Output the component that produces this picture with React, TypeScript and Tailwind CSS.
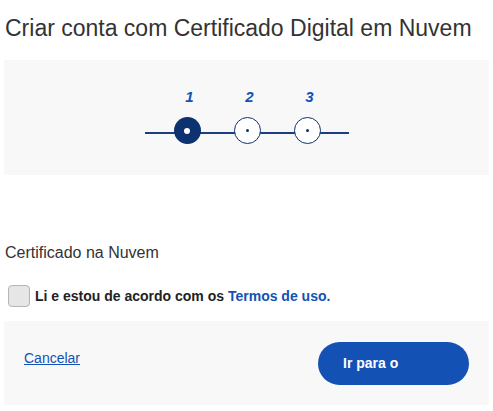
import React from "react";

function StepCircle({ active }: { active?: boolean }) {
  return active ? (
    <div className="w-[27px] h-[27px] rounded-full bg-[#0c326f] flex items-center justify-center relative z-10">
      <div className="w-[6px] h-[6px] rounded-full bg-white" />
    </div>
  ) : (
    <div className="w-[27px] h-[27px] rounded-full bg-white border border-[#0c326f] flex items-center justify-center relative z-10">
      <div className="w-[3px] h-[3px] rounded-full bg-[#0c326f]" />
    </div>
  );
}

export default function App() {
  return (
    <div className="w-[493px] h-[411px] bg-white font-['Liberation_Sans',Arial,sans-serif] text-[#333]">
      <h1 className="pt-[15px] pl-[5px] text-[23px] leading-[26px] text-[#333] font-normal">
        Criar conta com Certificado Digital em Nuvem
      </h1>
      <div className="mx-[4px] mt-[19px] h-[115px] bg-[#f8f8f8] flex justify-center">
        <div className="relative w-[204px] mt-[28px]">
          <div className="flex pl-[29px] gap-[33px]">
            {["1", "2", "3"].map((n, i) => (
              <div key={n} className="w-[27px] flex flex-col items-center">
                <span className="text-[15px] leading-[18px] font-bold italic text-[#1351b4] pl-[5px]">{n}</span>
                <div className="mt-[11px]">
                  <StepCircle active={i === 0} />
                </div>
              </div>
            ))}
          </div>
          <div className="absolute left-0 right-0 top-[44px] h-[2px] bg-[#1b3f7e]" />
        </div>
      </div>
      <div className="pl-[5px] mt-[68px] text-[16px] leading-[20px] text-[#333]">Certificado na Nuvem</div>
      <div className="flex items-center pl-[8px] mt-[22px]">
        <div className="w-[22px] h-[22px] rounded-[4px] bg-[#e6e6e6] border border-[#b5b5b5]" />
        <span className="ml-[5px] text-[14px] font-bold text-[#222]">
          Li e estou de acordo com os <span className="text-[#1351b4]">Termos de uso.</span>
        </span>
      </div>
      <div className="mx-[4px] mt-[14px] h-[84px] bg-[#f8f8f8] flex items-center justify-between pl-[20px] pr-[20px]">
        <a href="#" className="text-[14px] text-[#1351b4] underline -mt-[10px]">Cancelar</a>
        <button className="w-[151px] h-[43px] rounded-full bg-[#1351b4] text-white text-[14px] font-bold text-left pl-[25px]">
          Ir para o
        </button>
      </div>
    </div>
  );
}
